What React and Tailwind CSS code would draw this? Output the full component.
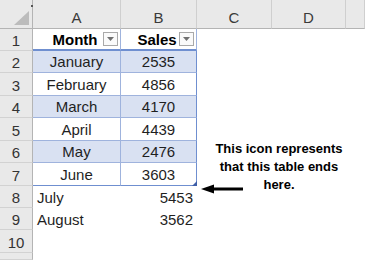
import { Fragment } from "react";

const months = [
  ["January", 2535],
  ["February", 4856],
  ["March", 4170],
  ["April", 4439],
  ["May", 2476],
  ["June", 3603],
];

function Corner() {
  return (
    <div className="relative flex items-end justify-end border-b border-r border-[#b4b4b4] bg-[#e9e9e9] pb-[3px] pr-[3px]">
      <svg width="15" height="14" viewBox="0 0 15 14">
        <polygon points="15,0 15,14 0,14" fill="#bcbcbc" />
      </svg>
      <span className="absolute right-[-1px] top-[5px] h-[2px] w-[2px] bg-[#555]" />
    </div>
  );
}

function ColHeader({ label }) {
  return (
    <div className="flex items-end justify-center border-b border-r border-b-[#b4b4b4] border-r-[#cfcfcf] bg-[#e9e9e9] pb-[2px] text-[#3a3a3a]">
      {label}
    </div>
  );
}

function RowHeader({ n }) {
  return (
    <div className="flex items-end justify-center border-b border-r border-b-[#d2d2d2] border-r-[#b4b4b4] bg-[#e9e9e9] pb-[1px] text-[#333]">
      {n}
    </div>
  );
}

function Blank() {
  return <div />;
}

function DropButton() {
  return (
    <span className="absolute bottom-[3px] right-[2px] flex h-[14px] w-[15px] items-center justify-center border border-[#a9a9a9] bg-[#fafafa]">
      <svg width="7" height="4" viewBox="0 0 7 4">
        <polygon points="0,0 7,0 3.5,4" fill="#707070" />
      </svg>
    </span>
  );
}

function TableHead({ label }) {
  return (
    <div className="relative flex items-end justify-center border-b-2 border-r border-b-[#6f8fd0] border-r-[#9fb3dd] bg-white pb-[1px] pr-[3px] font-bold text-black">
      {label}
      <DropButton />
    </div>
  );
}

function TableCell({ band, edge, last, children }) {
  return (
    <div
      className={
        "relative flex items-end justify-center border-b border-r pb-[2px] " +
        (band ? "bg-[#d9e1f2] " : "bg-white ") +
        (last ? "border-b-[#6f8fd0] " : "border-b-[#9fb3dd] ") +
        (edge ? "border-r-[#6f8fd0]" : "border-r-[#9fb3dd]")
      }
    >
      {children}
      {edge && last && (
        <svg className="absolute bottom-[-1px] right-[-1px]" width="5" height="5" viewBox="0 0 5 5">
          <polygon points="5,0 5,5 0,5" fill="#3f5fa8" />
        </svg>
      )}
    </div>
  );
}

export default function App() {
  return (
    <div className="relative h-[260px] w-[365px] overflow-hidden bg-white font-['Liberation_Sans',Arial,sans-serif] text-[15px] leading-[17px] text-[#1f1f1f]">
      <div className="grid h-full grid-cols-[33px_88px_76px_75px_74px_1fr] grid-rows-[29px_22px_22px_23px_22px_23px_22px_23px_22px_22px_23px_1fr]">
        <Corner />
        {["A", "B", "C", "D", ""].map((l, i) => (
          <ColHeader key={i} label={l} />
        ))}

        <RowHeader n={1} />
        <TableHead label="Month" />
        <TableHead label="Sales" />
        <Blank />
        <Blank />
        <Blank />

        {months.map(([m, v], i) => (
          <Fragment key={m}>
            <RowHeader n={i + 2} />
            <TableCell band={i % 2 === 0} last={i === 5}>
              {m}
            </TableCell>
            <TableCell band={i % 2 === 0} last={i === 5} edge>
              {v}
            </TableCell>
            <Blank />
            <Blank />
            <Blank />
          </Fragment>
        ))}

        {[
          ["July", 5453],
          ["August", 3562],
        ].map(([m, v], i) => (
          <Fragment key={m}>
            <RowHeader n={i + 8} />
            <div className="flex items-end pb-[2px] pl-[4px]">{m}</div>
            <div className="flex items-end justify-end pb-[2px] pr-[4px]">{v}</div>
            <Blank />
            <Blank />
            <Blank />
          </Fragment>
        ))}

        <RowHeader n={10} />
        <Blank />
        <Blank />
        <Blank />
        <Blank />
        <Blank />
        <RowHeader n="" />
      </div>

      {/* annotation */}
      <div className="absolute left-[206px] top-[140px] w-[146px] text-center text-[13px] font-bold leading-[18px] text-black">
        This icon represents
        <br />
        that this table ends
        <br />
        here.
      </div>
      <svg className="absolute left-[200px] top-[183px]" width="45" height="12" viewBox="0 0 45 12">
        <polygon points="1,6 14,1.5 14,10.5" fill="#000" />
        <rect x="13" y="4.5" width="30" height="3" fill="#000" />
      </svg>
    </div>
  );
}
